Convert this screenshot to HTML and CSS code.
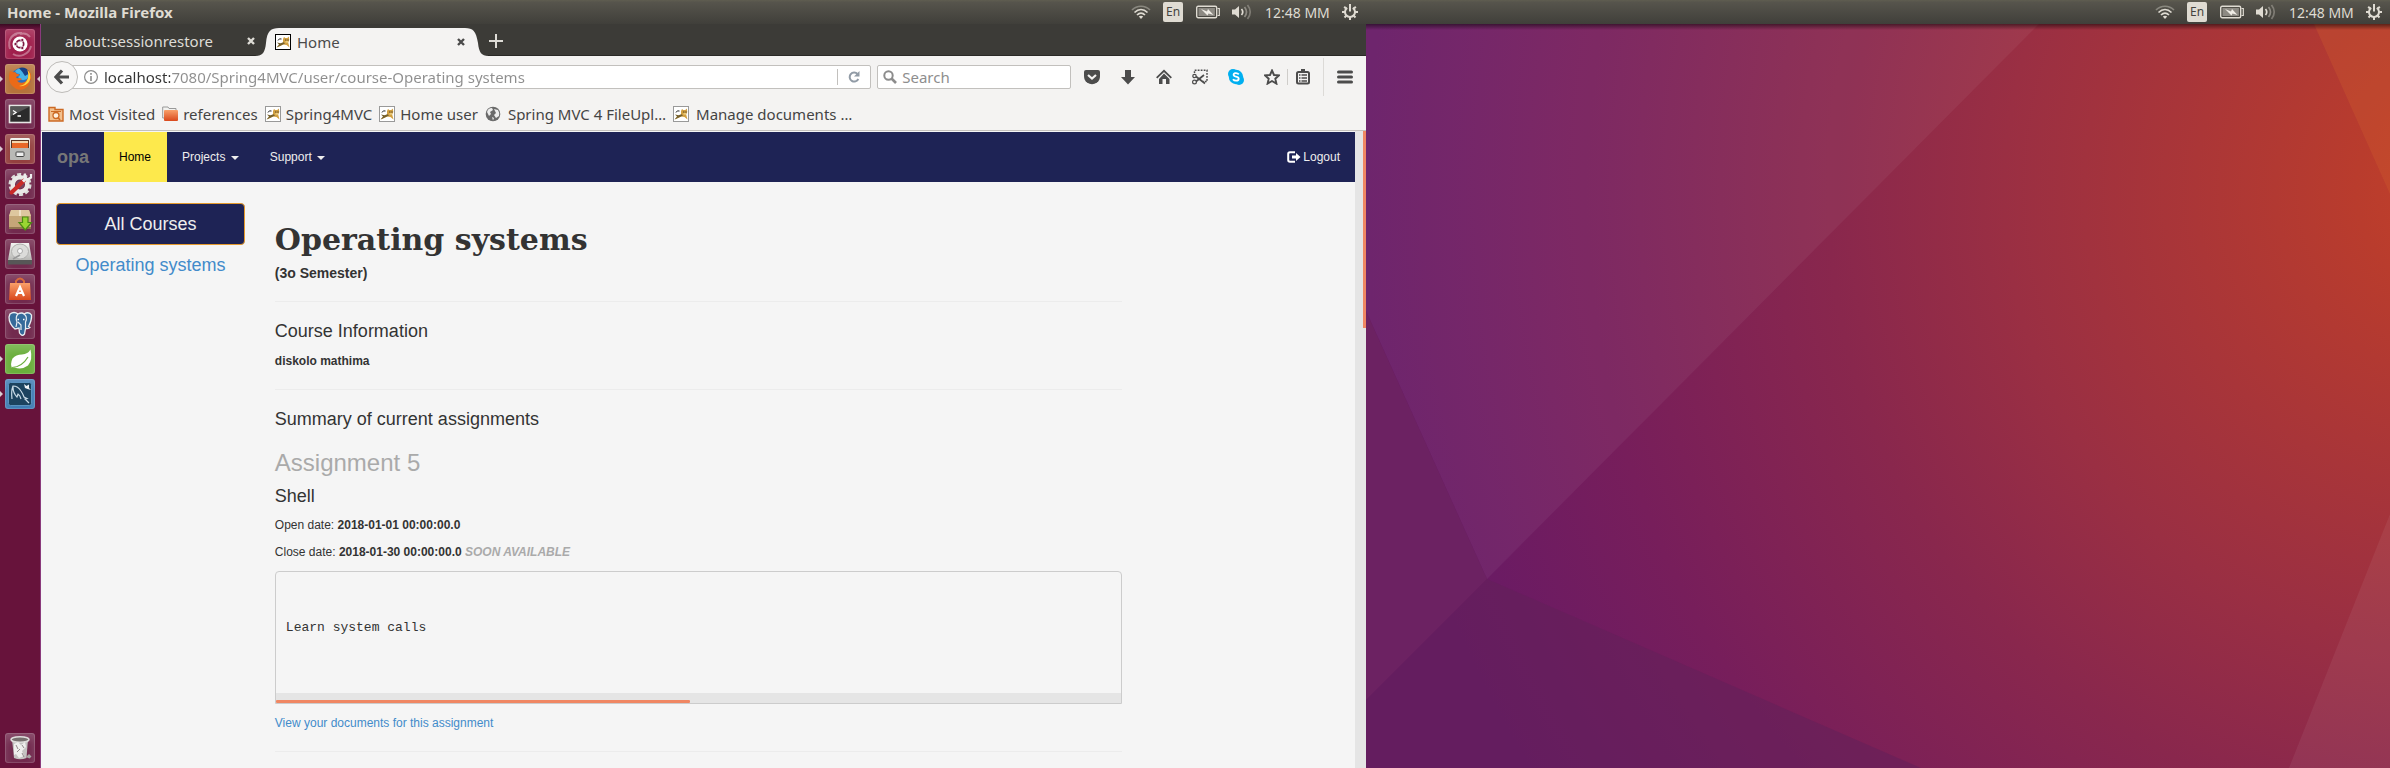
FILE: index.html
```html
<!DOCTYPE html>
<html lang="en">
<head>
<meta charset="utf-8">
<title>Home - Mozilla Firefox</title>
<link rel="stylesheet" href="styles.css">
</head>
<body>
<svg class="defs" aria-hidden="true">
  <defs>
    <linearGradient id="metal" x1="0" y1="0" x2="0" y2="1">
      <stop offset="0" stop-color="#f4f4f2"/><stop offset="1" stop-color="#a9a9a6"/>
    </linearGradient>
    <linearGradient id="orange" x1="0" y1="0" x2="0" y2="1">
      <stop offset="0" stop-color="#f9a06a"/><stop offset="1" stop-color="#d9481c"/>
    </linearGradient>
    <symbol id="wifi" viewBox="0 0 20 14">
      <g fill="none" stroke="#dfdbd2" stroke-width="1.7">
        <path d="M1 5C6 0 14 0 19 5" opacity=".4"/>
        <path d="M3.500 7.500C7.500 3.600 12.500 3.600 16.500 7.500"/>
        <path d="M6 10C8.500 7.500 11.500 7.500 14 10"/>
      </g>
      <path d="M7.800 11.600Q10 9.800 12.200 11.600L10 14Z" fill="#dfdbd2"/>
    </symbol>
    <symbol id="battery" viewBox="0 0 24 14">
      <rect x=".7" y="1.200" width="20" height="11.600" rx="1.500" fill="none" stroke="#dfdbd2" stroke-width="1.400"/>
      <rect x="2.500" y="3" width="16.400" height="8" fill="#8d8a83"/>
      <path d="M21.500 3.500H23.300V10.500H21.500" fill="none" stroke="#dfdbd2" stroke-width="1.200"/>
      <path d="M5 4L11 6.500L12 4L17.500 10L12.500 8.500L11.500 10.500Z" fill="#efece5"/>
    </symbol>
    <symbol id="sound" viewBox="0 0 20 16">
      <path d="M0 5.500H3L7 2V14L3 10.500H0Z" fill="#dfdbd2"/>
      <path d="M9.500 5Q12 8 9.500 11" fill="none" stroke="#dfdbd2" stroke-width="1.700"/>
      <path d="M12.500 3Q16.500 8 12.500 13" fill="none" stroke="#dfdbd2" stroke-width="1.700" opacity=".45"/>
      <path d="M15.500 1Q21 8 15.500 15" fill="none" stroke="#dfdbd2" stroke-width="1.700" opacity=".35"/>
    </symbol>
    <symbol id="gear" viewBox="0 0 16 16">
      <g fill="none" stroke="#dfdbd2">
        <path d="M5.200 3.800A5 5 0 1 0 10.800 3.800" stroke-width="2"/>
        <path d="M8 0V7.500" stroke-width="2"/>
        <path d="M8 13V16M0 8H3M13 8H16M2.200 2.800L4 4.500M13.800 2.800L12 4.500M2.500 13.500L4.500 11.500M13.500 13.500L11.500 11.500" stroke-width="2"/>
      </g>
    </symbol>
    <symbol id="cat" viewBox="0 0 16 16">
      <rect x=".5" y=".5" width="15" height="15" fill="#fff" stroke="currentColor"/>
      <path d="M8 5L9 3L10.300 4H12.300L13.800 2.500L14.300 6L13.200 8.500L14.500 13.500L11.500 11L8 10.500L5 12L2 13.500L5 10L8 8.500Z" fill="#d2a041"/>
      <path d="M2 8.500L5.500 9.300L8.500 8.200L10 9.500L6 11.500L1.500 13.500L4 10.500Z" fill="#76612d"/>
      <path d="M3 6.500Q4 4 6.500 5M10.300 6h1M12.500 6h1" fill="none" stroke="#222"/>
      <path d="M10.500 7.300h2.500v1.200h-2.500z" fill="#f4dc92"/>
    </symbol>
    <symbol id="close" viewBox="0 0 8 8">
      <path d="M1 1L7 7M7 1L1 7" stroke="currentColor" stroke-width="2.400"/>
    </symbol>
  </defs>
</svg>

<div class="screens">
  <section class="screen">
    <header class="panel">
      <span class="panel-title">Home - Mozilla Firefox</span>
      <div class="indicators">
        <svg class="i-wifi" aria-label="Network"><use href="#wifi"/></svg>
        <span class="lang">En</span>
        <svg class="i-battery" aria-label="Battery"><use href="#battery"/></svg>
        <svg class="i-sound" aria-label="Sound"><use href="#sound"/></svg>
        <time class="clock">12:48 MM</time>
        <svg class="i-gear" aria-label="Session"><use href="#gear"/></svg>
      </div>
    </header>

    <div class="desktop">
      <nav class="launcher" aria-label="Launcher">
        <button class="app dash" aria-label="Search your computer"><svg viewBox="0 0 30 30">
          <path d="M5 20C2 10 8 3 17 4M8 25C14 29 24 26 26 17M25 8C22 4 18 4 15 5M4 14C5 8 8 6 12 5" fill="none" stroke="#fff" stroke-opacity=".35" stroke-width="2"/>
          <circle cx="15" cy="15" r="7.500" fill="#fff"/>
          <circle cx="15" cy="15" r="3.700" fill="none" stroke="#7b1740" stroke-width="1.700"/>
          <g fill="#7b1740" stroke="#fff" stroke-width=".7"><circle cx="10.500" cy="15" r="1.600"/><circle cx="17.300" cy="11" r="1.600"/><circle cx="17.300" cy="19" r="1.600"/></g></svg></button>
        <button class="app firefox running focused" aria-label="Firefox"><svg viewBox="0 0 30 30">
          <circle cx="16" cy="14" r="10" fill="#2a6fc0"/>
          <path d="M10 7Q15 2 22 6Q25 10 22 15Q16 18 13 13Q15 12 15 10Q11 10 10 7Z" fill="#45b3e6"/>
          <path d="M14 4Q21 2 25 9L20 12Q17 7 14 4Z" fill="#173f83"/>
          <path d="M5 7Q2 16 7 21.500Q13 28 20 24.500Q27 20 26 10Q24 7 22.500 6Q25 14 20.500 17.500Q15 20.500 12 16.500Q14 17 16.500 15.500Q17 14 14 14Q12 15 11 13Q14 12 14.500 10.500Q11 10 10 8Q7 8.500 5 7Z" fill="#ea6a18"/>
          <path d="M22.500 6Q27 11 24.500 17Q21 23 14 22Q21 21 23 14Q24 10 22.500 6Z" fill="#ffd23c"/></svg></button>
        <button class="app terminal" aria-label="Terminal"><svg viewBox="0 0 30 30">
          <rect x="4.500" y="6.500" width="21" height="17" fill="#2b2b2b" stroke="#e6e6e4" stroke-width="1.600"/>
          <path d="M6 8H24L6 17Z" fill="#555"/>
          <path d="M8 11.500L11 13.500L8 15.500M12.500 17H16" fill="none" stroke="#fff" stroke-width="1.300"/></svg></button>
        <button class="app files running" aria-label="Files"><svg viewBox="0 0 30 30">
          <rect x="5" y="4" width="20" height="22" rx="1.500" fill="url(#metal)"/>
          <rect x="6" y="6" width="18" height="8" fill="#5a3423"/>
          <rect x="7" y="7" width="16" height="3" fill="#f4d6ae"/><rect x="7" y="9" width="16" height="5" fill="#e8682a"/>
          <rect x="5" y="14" width="20" height="12" rx="1" fill="#b9b9b6"/>
          <rect x="11" y="18" width="8" height="4.500" rx=".8" fill="#eee" stroke="#444"/></svg></button>
        <button class="app settings" aria-label="System Settings"><svg viewBox="0 0 30 30">
          <circle cx="15" cy="15.500" r="10" fill="none" stroke="#dcdcda" stroke-width="3" stroke-dasharray="4 2.280"/>
          <circle cx="15" cy="15.500" r="7.300" fill="none" stroke="#e9e9e7" stroke-width="4.500"/>
          <circle cx="15" cy="15.500" r="4" fill="#77455d"/>
          <path d="M6.500 23.500L19 11.500" stroke="#c92b28" stroke-width="4" stroke-linecap="round"/>
          <path d="M18 12.500L22 8.500" stroke="#eee" stroke-width="3"/>
          <path d="M20 4.500V9L22.500 10.500L26 8.500V5" fill="none" stroke="#eee" stroke-width="2.200"/></svg></button>
        <button class="app install" aria-label="Package Installer"><svg viewBox="0 0 30 30">
          <path d="M6 6H24L26 12V24H4V12Z" fill="#c5a678"/><path d="M6 6H24L26 12H4Z" fill="#dec79f"/>
          <path d="M14 6H16V12H14Z" fill="#efe2c8"/><path d="M4 23H26V25H4Z" fill="#91764e"/>
          <path d="M17.500 13H23V18.500H26.500L20.200 26L14 18.500H17.500Z" fill="#9ad532" stroke="#4b8a13" stroke-width="1.200"/></svg></button>
        <button class="app disk" aria-label="Disks"><svg viewBox="0 0 30 30">
          <path d="M6 4H24L27 21V25H3V21Z" fill="url(#metal)"/><path d="M3 21H27V25.500H3Z" fill="#575757"/>
          <ellipse cx="15" cy="12.500" rx="8.500" ry="7.500" fill="#dcdcda" stroke="#b0b0ae"/>
          <circle cx="15" cy="12" r="2.500" fill="#f8f8f8" stroke="#aaa"/><path d="M8 20L15 16" stroke="#999" stroke-width="1.500"/></svg></button>
        <button class="app software" aria-label="Software Center"><svg viewBox="0 0 30 30">
          <path d="M11 10V7Q15 2 19 7V10" fill="none" stroke="#d76a3b" stroke-width="2"/>
          <path d="M5 9H25L26 26H4Z" fill="url(#orange)"/>
          <path d="M11 22L15 13L19 22M12.500 19H17.500" fill="none" stroke="#fff" stroke-width="2.200"/></svg></button>
        <button class="app pgadmin" aria-label="pgAdmin"><svg viewBox="0 0 30 30">
          <path d="M5 5Q9 2 13 5Q17 3 19 5Q24 2 26.500 6Q27 11 23.500 17.500L25 18.500Q24 20 20.500 19.500L19.500 25Q17 28 14.500 24L14 19L10 20Q4 15 4 8Z" fill="#356a9a" stroke="#e8edf1" stroke-width="1.300"/>
          <path d="M13 5Q10 8 12 13L11 18M19 5Q23 8 20.500 13L20.500 19M13 13L16 16V21" fill="none" stroke="#e8edf1" stroke-width="1.200"/>
          <path d="M12.500 10.500h1.500M18 10.500h1.500" stroke="#fff" stroke-width="1.500"/></svg></button>
        <button class="app spring running" aria-label="Spring Tool Suite"><svg viewBox="0 0 30 30">
          <path d="M25.500 5.500Q28 16 23 21.500Q17 26 9.500 23.500L7 24Q5 20 7.500 14.500Q11 10.500 17 10.500Q23 10 25.500 5.500Z" fill="#fff"/>
          <path d="M7 23.500Q17 23 23 13" fill="none" stroke="#6aae3c" stroke-width="1.200"/></svg></button>
        <button class="app workbench running" aria-label="MySQL Workbench"><svg viewBox="0 0 30 30">
          <rect x="3.500" y="3.500" width="23" height="23" rx="2" fill="#1c435f" stroke="#5a93c0"/>
          <path d="M7 20Q6 12 8 7Q13 7 16 12Q18 15 19 18L22 19.500L20 20L24 24M8 8Q8 14 12 18L13 15Q15 16 16 20" fill="none" stroke="#c9dbe7" stroke-width="1.200"/>
          <path d="M19 5L21.500 7L24 5.500V9L26 11L22.500 10L20 9Z" fill="#eef3f6"/></svg></button>
        <button class="app trash" aria-label="Trash"><svg viewBox="0 0 30 30">
          <path d="M7 6H23L21.500 25Q15 27.500 9 25Z" fill="#c4c2c1"/>
          <ellipse cx="15" cy="6.500" rx="9" ry="2.800" fill="#77706f" stroke="#dedcdb" stroke-width="1.500"/>
          <path d="M9 11l4-2 3 3 4-3 1 5-4 4 2 5-5 2-3-4-2 1z" fill="#efeeed"/>
          <path d="M11 12l2 4M17 12l2 3M12 19l3-3M17 20l2 4" stroke="#91898a"/><path d="M21 24l3-3 2.500 2.500-2 2z" fill="#aaa6a5"/></svg></button>
      </nav>

      <main class="browser">
        <div class="tabs" role="tablist">
          <div class="tab">
            <span class="tab-name">about:sessionrestore</span>
            <button class="tab-close" aria-label="Close tab"><svg><use href="#close"/></svg></button>
          </div>
          <div class="tab active">
            <svg class="tab-shape" viewBox="0 0 234 28" preserveAspectRatio="none" aria-hidden="true"><path d="M0 28C8 28 10 24 11 15C12 3 16 0 24 0H210C218 0 221 3 223 15C224 24 226 28 234 28Z" fill="#f4f3f2"/></svg>
            <svg class="fav tab-fav" aria-hidden="true"><use href="#cat"/></svg>
            <span class="tab-name">Home</span>
            <button class="tab-close" aria-label="Close tab"><svg><use href="#close"/></svg></button>
          </div>
          <button class="new-tab" aria-label="New tab"><svg viewBox="0 0 14 14"><path d="M7 0V14M0 7H14" stroke="#dedcd6" stroke-width="2"/></svg></button>
        </div>

        <div class="toolbar">
          <button class="back" aria-label="Back"><svg viewBox="0 0 16 16"><path d="M8 1.500L2 8L8 14.500M2.500 8H15" fill="none" stroke="#4c4c4c" stroke-width="3.200"/></svg></button>
          <div class="urlbox">
            <svg class="i14" viewBox="0 0 14 14" aria-hidden="true"><circle cx="7" cy="7" r="6.400" fill="none" stroke="#8c8c8c" stroke-width="1.200"/><path d="M7 6V11M7 3V4.800" stroke="#8c8c8c" stroke-width="1.600"/></svg>
            <input class="url" type="text" aria-label="Address" value="localhost:7080/Spring4MVC/user/course-Operating systems">
            <button class="reload" aria-label="Reload"><svg viewBox="0 0 12 12"><path d="M9.500 3A4.500 4.500 0 1 0 10.300 8" fill="none" stroke="#919ba6" stroke-width="2"/><path d="M11.500 0V5.500H6Z" fill="#919ba6"/></svg></button>
          </div>
          <div class="searchbox">
            <svg class="i14" viewBox="0 0 14 14" aria-hidden="true"><circle cx="5.500" cy="5.500" r="4.200" fill="none" stroke="#8c8c8c" stroke-width="2"/><path d="M8.500 8.500L13 13" stroke="#8c8c8c" stroke-width="2.600"/></svg>
            <input class="search" type="search" aria-label="Search" placeholder="Search">
          </div>
          <div class="tools">
            <button aria-label="Pocket"><svg viewBox="0 0 16 16"><path d="M2 1H14Q16 1 16 3V7Q16 11 13 13.500Q8 17 3 13.500Q0 11 0 7V3Q0 1 2 1Z" fill="#4c4c4c"/><path d="M4 6L8 9.500L12 6" fill="none" stroke="#f4f3f2" stroke-width="2.200"/></svg></button>
            <button aria-label="Downloads"><svg viewBox="0 0 16 16"><path d="M5 1H11V8H15L8 15.500L1 8H5Z" fill="#4c4c4c"/></svg></button>
            <button aria-label="Home"><svg viewBox="0 0 16 16"><path d="M.7 8.800L8 1.800L15.300 8.800" fill="none" stroke="#4c4c4c" stroke-width="1.800"/><path d="M8 4.500L13.500 10V15H10V10H6.500V15H3V10Z" fill="#4c4c4c"/></svg></button>
            <button aria-label="Screenshot"><svg viewBox="0 0 16 16"><path d="M2.500 4V1.200H15V12.500H11" fill="none" stroke="#4c4c4c" stroke-width="1.500" stroke-dasharray="1.800 1.200"/><path d="M4 7.500L13 14.500M4 12.500L12 6" stroke="#4c4c4c" stroke-width="1.700"/><circle cx="2.500" cy="7" r="1.700" fill="none" stroke="#4c4c4c" stroke-width="1.200"/><circle cx="2.500" cy="13" r="1.900" fill="none" stroke="#4c4c4c" stroke-width="1.200"/></svg></button>
            <button aria-label="Skype"><svg viewBox="0 0 16 16"><circle cx="5" cy="5" r="5" fill="#00aff0"/><circle cx="11" cy="11" r="5" fill="#00aff0"/><circle cx="8" cy="8" r="7.200" fill="#00aff0"/><path d="M10.800 5.400Q9.500 4 7.500 4.200Q5.200 4.600 5.700 6.200Q6 7.300 8 7.700Q10.700 8.200 10.700 9.800Q10.500 11.600 8.200 11.700Q6 11.700 5 10.200" fill="none" stroke="#fff" stroke-width="1.800"/></svg></button>
            <button aria-label="Bookmark this page"><svg viewBox="0 0 16 16"><path d="M8 1.500L10 6L15 6.400L11.300 9.700L12.400 14.600L8 12L3.600 14.600L4.700 9.700L1 6.400L6 6Z" fill="none" stroke="#4c4c4c" stroke-width="1.900"/></svg></button>
            <button class="lists" aria-label="Bookmarks list"><svg viewBox="0 0 16 16"><path d="M6 0H10V3H6Z" fill="#4c4c4c"/><rect x="2" y="3" width="12" height="11.500" rx="1.500" fill="none" stroke="#4c4c4c" stroke-width="2"/><path d="M4 6H5.500M4 9H5.500M4 12H5.500M6.500 6H12M6.500 9H12M6.500 12H12" stroke="#4c4c4c" stroke-width="1.300"/></svg></button>
            <button class="menu" aria-label="Open menu"><svg viewBox="0 0 16 16"><path d="M1.500 3H14.500M1.500 8H14.500M1.500 13H14.500" stroke="#4c4c4c" stroke-width="3" stroke-linecap="round"/></svg></button>
          </div>
        </div>

        <nav class="bookmarks" aria-label="Bookmarks">
          <a href="#"><svg class="fav" viewBox="0 0 16 16" aria-hidden="true"><path d="M1 15V1.500H7V3.500H15V15Z" fill="#f3c18f" stroke="#cc6a24" stroke-width="1.400"/><path d="M3 5.500H13" stroke="#cc6a24"/><circle cx="8" cy="9.500" r="3" fill="#fff1e0" stroke="#cc6a24" stroke-width="1.300"/><path d="M10 11.500L12 14" stroke="#cc6a24" stroke-width="1.600"/></svg>Most Visited</a>
          <a href="#"><svg class="fav" viewBox="0 0 16 16" aria-hidden="true"><path d="M.7 12V1H6L7 2.500H14V12Z" fill="#f2f2f0" stroke="#999" stroke-width="1"/><rect x="2" y="4" width="14" height="11" rx="1" fill="url(#orange)"/></svg>references</a>
          <a href="#"><svg class="fav" aria-hidden="true"><use href="#cat"/></svg>Spring4MVC</a>
          <a href="#"><svg class="fav" aria-hidden="true"><use href="#cat"/></svg>Home user</a>
          <a href="#" class="wide"><svg class="fav" viewBox="0 0 16 16" aria-hidden="true"><circle cx="8" cy="8" r="7.300" fill="#6a6a6a"/><path d="M2 6Q3 2 7 2L8 4L5 6L6 8L4 10Z M9 3L13 4Q15 7 14 10L11 12L9 9L11 7Z M7 11L9 12L8 14.500Z" fill="#ededed"/></svg>Spring MVC 4 FileUpl…</a>
          <a href="#" class="wide"><svg class="fav" aria-hidden="true"><use href="#cat"/></svg>Manage documents …</a>
        </nav>

        <div class="viewport">
          <div class="page">
            <nav class="navbar">
              <a class="brand" href="#">opa</a>
              <a class="nav-item current" href="#">Home</a>
              <a class="nav-item" href="#">Projects <b class="caret"></b></a>
              <a class="nav-item" href="#">Support <b class="caret"></b></a>
              <a class="nav-item logout" href="#"><svg viewBox="0 0 14 12" aria-hidden="true"><path d="M8 1.200H3Q1.200 1.200 1.200 3V9Q1.200 10.800 3 10.800H8" fill="none" stroke="#fff" stroke-width="2"/><path d="M5 4.500H9V2L13.500 6L9 10V7.500H5Z" fill="#fff"/></svg>Logout</a>
            </nav>
            <div class="columns">
              <aside class="sidebar">
                <a class="all" href="#">All Courses</a>
                <a class="course" href="#">Operating systems</a>
              </aside>
              <article class="content">
                <h1>Operating systems</h1>
                <p class="semester">(3o Semester)</p>
                <hr>
                <h2>Course Information</h2>
                <p><b>diskolo mathima</b></p>
                <hr>
                <h2>Summary of current assignments</h2>
                <h3>Assignment 5</h3>
                <h4>Shell</h4>
                <p>Open date: <b>2018-01-01 00:00:00.0</b></p>
                <p>Close date: <b>2018-01-30 00:00:00.0</b> <b class="soon">SOON AVAILABLE</b></p>
                <div class="notes">
                  <pre>Learn system calls</pre>
                  <div class="hscroll"><div class="hthumb"></div></div>
                </div>
                <p><a href="#">View your documents for this assignment</a></p>
                <hr>
              </article>
            </div>
          </div>
          <div class="vscroll"><div class="vthumb"></div></div>
        </div>
      </main>
    </div>
  </section>

  <section class="screen second">
    <header class="panel">
      <div class="indicators">
        <svg class="i-wifi" aria-label="Network"><use href="#wifi"/></svg>
        <span class="lang">En</span>
        <svg class="i-battery" aria-label="Battery"><use href="#battery"/></svg>
        <svg class="i-sound" aria-label="Sound"><use href="#sound"/></svg>
        <time class="clock">12:48 MM</time>
        <svg class="i-gear" aria-label="Session"><use href="#gear"/></svg>
      </div>
    </header>
    <div class="wall">
      <svg viewBox="0 24 1024 744" preserveAspectRatio="none" aria-hidden="true">
        <defs>
          <radialGradient id="warm" gradientUnits="userSpaceOnUse" cx="1100" cy="190" r="1100">
            <stop offset="0" stop-color="#c3412a"/><stop offset=".1" stop-color="#b93c2d"/>
            <stop offset=".42" stop-color="#9a2f43"/><stop offset=".58" stop-color="#89274d"/>
            <stop offset=".8" stop-color="#771e5b"/><stop offset="1" stop-color="#671a66"/>
          </radialGradient>
        </defs>
        <rect y="24" width="1024" height="744" fill="url(#warm)"/>
        <path d="M0 24H673L121 579L0 311Z" fill="#fff" fill-opacity=".05"/>
        <path d="M0 311L121 579L0 700Z" fill="#6c2262"/>
        <path d="M0 700L121 579L555 768H0Z" fill="#62205a" fill-opacity=".55"/>
        <path d="M948 24H1024V194Z" fill="#d06030" fill-opacity=".3"/>
        <path d="M1024 514V768H923Z" fill="#fff" fill-opacity=".06"/>
      </svg>
    </div>
  </section>
</div>
</body>
</html>
```
FILE: styles.css
```css
* { box-sizing: border-box; }
body { margin: 0; font-family: "Noto Sans", sans-serif; overflow: hidden; }
button { border: 0; padding: 0; margin: 0; background: none; font: inherit; color: inherit; display: grid; place-items: center; }
a { text-decoration: none; }
.defs { position: absolute; width: 0; height: 0; }

.screens { display: grid; grid-template-columns: 1366fr 1024fr; height: 100vh; }
.screen { display: flex; flex-direction: column; min-width: 0; min-height: 0; }

/* Top panel */
.panel { display: flex; align-items: center; flex: none; height: 24px; padding: 0 8px 0 7px; color: #dfdbd2; background: linear-gradient(#5f5d50, #56544c 10%, #403f3a); }
.panel-title { font-size: 15px; font-weight: 700; }
.indicators { display: flex; align-items: center; margin-left: auto; font-size: 14px; }
.i-wifi { width: 20px; height: 14px; margin-right: 12px; }
.lang { width: 20px; height: 20px; margin-right: 13px; border-radius: 2px; background: #dfdbd2; color: #45433e; text-align: center; font-size: 12px; line-height: 20px; }
.i-battery { width: 24px; height: 14px; margin-right: 12px; }
.i-sound { width: 20px; height: 16px; margin-right: 13px; }
.clock { width: 64px; margin-right: 13px; white-space: nowrap; }
.i-gear { width: 16px; height: 16px; }

.desktop { display: flex; flex: 1; min-height: 0; }

/* Launcher */
.launcher { display: flex; flex-direction: column; gap: 5px; flex: none; width: 41px; padding: 5px; background: linear-gradient(#3a0a22, #67133b 5px); border-right: 1px solid #8a3a7c; }
.app { position: relative; flex: none; width: 30px; height: 30px; border-radius: 3px; background: #722a4e; box-shadow: inset 0 0 0 1px rgba(255, 255, 255, .14), inset 0 6px 8px rgba(255, 255, 255, .18); }
.app svg { width: 30px; height: 30px; }
.dash { background: #a01f4c; }
.firefox { background: #b5723b; }
.files { background: #94403f; }
.spring { background: #6aae3c; }
.workbench { background: #3f7cb4; }
.trash { margin-top: auto; }
.running::before, .focused::after { content: ""; position: absolute; top: 12px; border: 3px solid transparent; }
.running::before { left: -5px; border-right: 0; border-left-color: #d9cdd3; }
.focused::after { right: -5px; border-left: 0; border-right-color: #d9cdd3; }

/* Browser chrome */
.browser { display: flex; flex-direction: column; flex: 1; min-width: 0; background: #f4f3f2; }
.tabs { display: flex; align-items: end; flex: none; height: 32px; background: #3c3b37; border-bottom: 1px solid #2a2926; font-size: 15px; }
.tab { position: relative; display: flex; align-items: center; height: 28px; width: 214px; padding: 0 0 0 24px; color: #dedcd6; }
.tab-name, .tab-fav, .tab-close { position: relative; }
.tab-close { margin-left: auto; width: 8px; height: 8px; }
.tab-close svg { width: 8px; height: 8px; }
.tab.active { width: 234px; margin-bottom: -1px; padding: 0 24px 0 20px; color: #4a4a4a; }
.tab.active .tab-name { margin-left: 6px; }
.tab-shape { position: absolute; inset: 0; width: 100%; height: 100%; }
.tab-fav { color: #000; }
.fav { width: 16px; height: 16px; flex: none; }
.new-tab { width: 14px; height: 28px; }
.new-tab svg { width: 14px; height: 14px; }

.toolbar { display: flex; align-items: center; flex: none; height: 42px; padding: 0 5px; }
.back { position: relative; flex: none; width: 32px; height: 32px; border: 1px solid #bdbbb8; border-radius: 50%; background: #f7f6f5; }
.back svg { width: 16px; height: 16px; }
.urlbox, .searchbox { display: flex; align-items: center; min-width: 0; height: 24px; border: 1px solid #c2c0bd; border-radius: 2px; background: #fff; }
.urlbox { flex: 804; margin-left: -8px; padding-left: 13px; }
.searchbox { flex: 191; margin-left: 6px; padding-left: 5px; }
.i14 { width: 14px; height: 14px; flex: none; }
.url, .search { flex: 1; min-width: 0; height: 22px; padding: 0; border: 0; outline: 0; background: none; font: 15px "Noto Sans", sans-serif; }
.url { margin-left: 6px; -webkit-text-fill-color: transparent; background: linear-gradient(90deg, #333 66px, #8e8e8e 66px); -webkit-background-clip: text; background-clip: text; }
.search { margin-left: 5px; }
.search::placeholder { color: #8e8e8e; }
.reload { width: 33px; height: 16px; border-left: 1px solid #c2c0bd; }
.reload svg { width: 12px; height: 12px; }
.tools { display: flex; align-items: center; flex: none; margin-left: 13px; gap: 20px; padding-right: 8px; }
.tools button { width: 16px; height: 16px; }
.tools svg { width: 16px; height: 16px; }
.tools .lists { margin-left: -13px; width: 24px; border-left: 1px solid #cfcdca; justify-content: end; }
.tools .menu { margin-left: -8px; width: 30px; height: 38px; border-left: 1px solid #dcdad7; justify-content: end; }

.bookmarks { display: flex; align-items: center; gap: 7px; flex: none; height: 33px; padding: 0 7px; border-bottom: 1px solid #c4c1bd; font-size: 15px; white-space: nowrap; }
.bookmarks a { display: flex; align-items: center; gap: 5px; color: #444; }
.bookmarks .wide { gap: 7px; }
.bookmarks .fav { color: #999; }

/* Web page */
.viewport { display: flex; flex: 1; min-height: 0; }
.page { flex: 1; min-width: 0; padding: 1px 0 0 1px; overflow: hidden; background: #f5f5f5; font: 12px/18px "Liberation Sans", Arial, sans-serif; color: #333; }
.page a { color: #428bca; }
.vscroll { width: 11px; flex: none; padding-left: 8px; background: #e5e5e5; }
.vthumb { height: 31%; background: #f08763; }
.navbar { display: flex; height: 50px; background: #1e2355; line-height: 50px; }
.navbar .brand { padding: 0 15px; font-size: 18px; font-weight: 700; color: #777; }
.navbar .nav-item { padding: 0 16px 0 15px; color: #eee; }
.navbar .current { background: #fde94c; color: #000; }
.caret { display: inline-block; margin-left: 2px; vertical-align: middle; border-top: 4px solid; border-left: 4px solid transparent; border-right: 4px solid transparent; }
.navbar .logout { display: flex; align-items: center; gap: 2px; margin-left: auto; padding-right: 15px; }
.logout svg { width: 14px; height: 12px; }
.columns { display: grid; grid-template-columns: 2fr 8fr 2fr; padding-top: 21px; }
.sidebar { padding: 0 16px 0 14px; text-align: center; font-size: 18px; }
.sidebar a { display: block; padding: 10px 0; line-height: 20px; }
.sidebar .all { border: 1px solid #e59a2d; border-radius: 4px; background: #1e2355; color: #eee; }
.content { padding: 19px 14px 0; }
.content h1 { margin: 0 0 6px; font: 700 30px/36px "DejaVu Serif", serif; }
.content .semester { margin: 0; font-size: 14px; font-weight: 700; }
.content hr { margin: 19px 0; border: 0; border-top: 1px solid #ececec; }
.content h2 { margin: 0 0 11px; font-size: 18px; font-weight: 400; line-height: 20px; }
.content h3 { margin: 21px 0 10px; font-size: 24px; font-weight: 400; line-height: 26px; color: #aaa; }
.content h4 { margin: 0 0 10px; font-size: 18px; font-weight: 400; line-height: 20px; }
.content p { margin: 0 0 9px; }
.soon { font-style: italic; color: #aaa; }
.notes { margin: 10px 0; border: 1px solid #ccc; border-radius: 4px 4px 0 0; }
.notes pre { margin: 0; padding: 47px 10px 56px; font: 13px/18px "Liberation Mono", monospace; }
.hscroll { height: 10px; padding-top: 7px; background: #e5e5e5; }
.hthumb { width: 49%; height: 3px; border-radius: 1px; background: #f08763; }

/* Wallpaper */
.wall { position: relative; flex: 1; min-height: 0; }
.wall svg { display: block; width: 100%; height: 100%; }
.wall::after { content: ""; position: absolute; inset: 0 0 auto; height: 6px; background: linear-gradient(rgba(0, 0, 0, .5), transparent); }
```
